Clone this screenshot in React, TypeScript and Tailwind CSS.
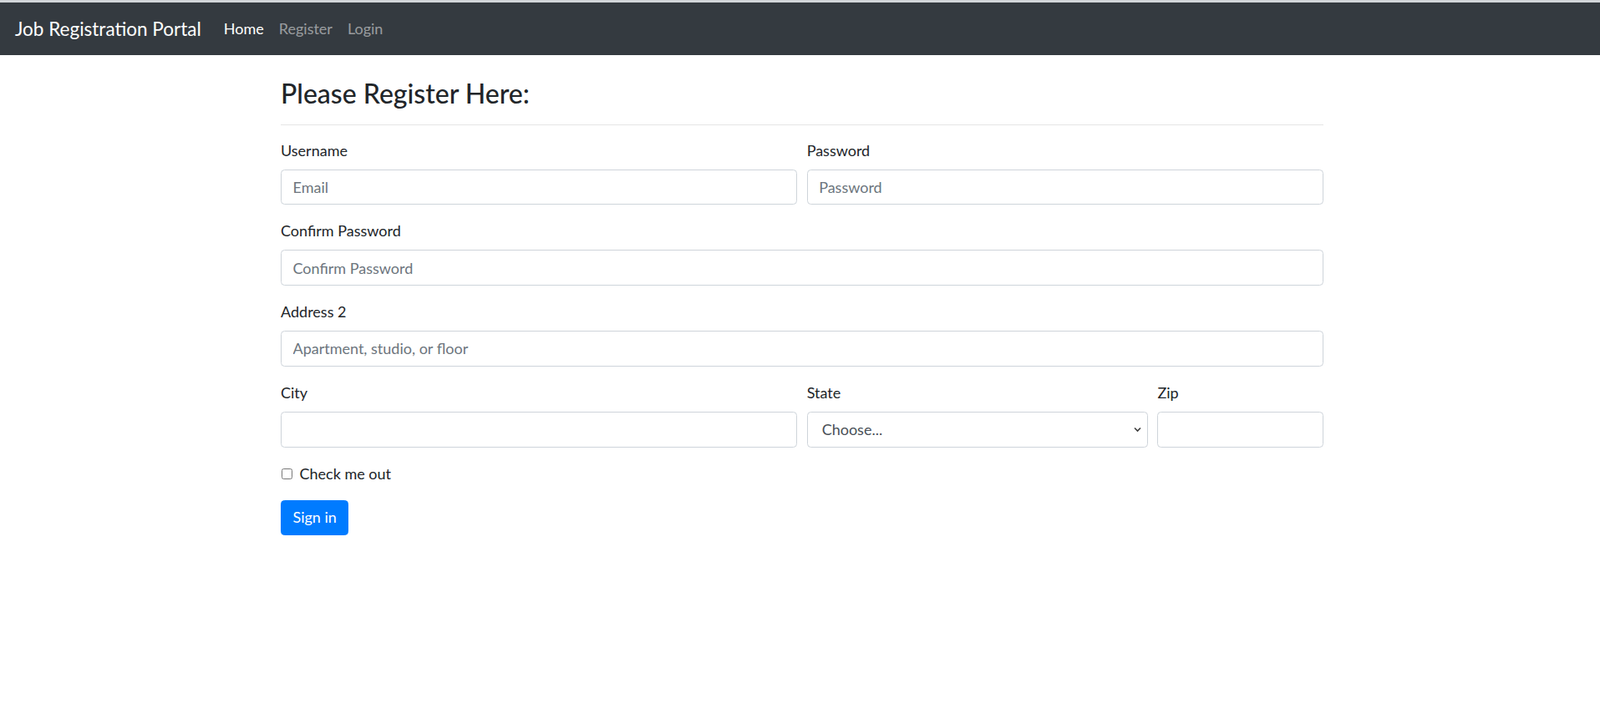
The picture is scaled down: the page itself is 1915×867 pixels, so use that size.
import React from "react";

const inputCls =
  "block w-full h-[42.75px] px-[13.5px] text-[18px] leading-[27px] text-[#495057] bg-white border border-[#ced4da] rounded-[4.5px] placeholder:text-[#6c757d] outline-none";

function Label({ children }: { children: React.ReactNode }) {
  return <label className="block mb-[9px] text-[18px] leading-[27px] text-[#212529]">{children}</label>;
}

export default function App() {
  return (
    <div className="min-h-screen bg-white text-[#212529] font-['Lato','Liberation_Sans',sans-serif]">
      <div className="h-[3px] bg-[#d2d5d9]" />
      <nav className="h-[63px] bg-[#343a40] px-[18px] flex items-center">
        <span className="text-[22.5px] leading-[34px] text-white mr-[18px]">Job Registration Portal</span>
        <a className="px-[9px] text-[18px] leading-[27px] text-white">Home</a>
        <a className="px-[9px] text-[18px] leading-[27px] text-white/50">Register</a>
        <a className="px-[9px] text-[18px] leading-[27px] text-white/50">Login</a>
      </nav>
      <div className="w-[1248px] ml-[336px] pt-[27px]">
        <h3 className="text-[32px] leading-[37.8px] font-medium">Please Register Here:</h3>
        <hr className="mt-[18px] mb-[16.8px] border-0 border-t border-black/10" />
        <form>
          <div className="grid grid-cols-2 gap-x-[11.25px]">
            <div className="mb-[18px]">
              <Label>Username</Label>
              <input className={inputCls} placeholder="Email" />
            </div>
            <div className="mb-[18px]">
              <Label>Password</Label>
              <input className={inputCls} type="password" placeholder="Password" />
            </div>
          </div>
          <div className="mb-[18px]">
            <Label>Confirm Password</Label>
            <input className={inputCls} type="password" placeholder="Confirm Password" />
          </div>
          <div className="mb-[18px]">
            <Label>Address 2</Label>
            <input className={inputCls} placeholder="Apartment, studio, or floor" />
          </div>
          <div className="grid grid-cols-[618.4px_408.5px_1fr] gap-x-[11.25px]">
            <div className="mb-[18px]">
              <Label>City</Label>
              <input className={inputCls} />
            </div>
            <div className="mb-[18px]">
              <Label>State</Label>
              <div className="relative">
                <select className={inputCls + " appearance-none pl-[17px]"} defaultValue="">
                  <option value="">Choose...</option>
                  <option>...</option>
                </select>
                <svg
                  className="absolute right-[8px] top-[18px] pointer-events-none"
                  width="9"
                  height="7"
                  viewBox="0 0 9 7"
                >
                  <path d="M1 1.5 L4.5 5 L8 1.5" fill="none" stroke="#3c3c3c" strokeWidth="1.6" />
                </svg>
              </div>
            </div>
            <div className="mb-[18px]">
              <Label>Zip</Label>
              <input className={inputCls} />
            </div>
          </div>
          <div className="mb-[18px] relative pl-[22.5px] flex items-center h-[27px]">
            <input
              type="checkbox"
              className="absolute left-[1px] top-[7px] w-[13px] h-[13px] m-0"
            />
            <label className="text-[18px] leading-[27px]">Check me out</label>
          </div>
          <button
            type="button"
            className="h-[42.75px] px-[13.5px] text-[18px] leading-[27px] text-white bg-[#007bff] border border-[#007bff] rounded-[4.5px]"
          >
            Sign in
          </button>
        </form>
      </div>
    </div>
  );
}
